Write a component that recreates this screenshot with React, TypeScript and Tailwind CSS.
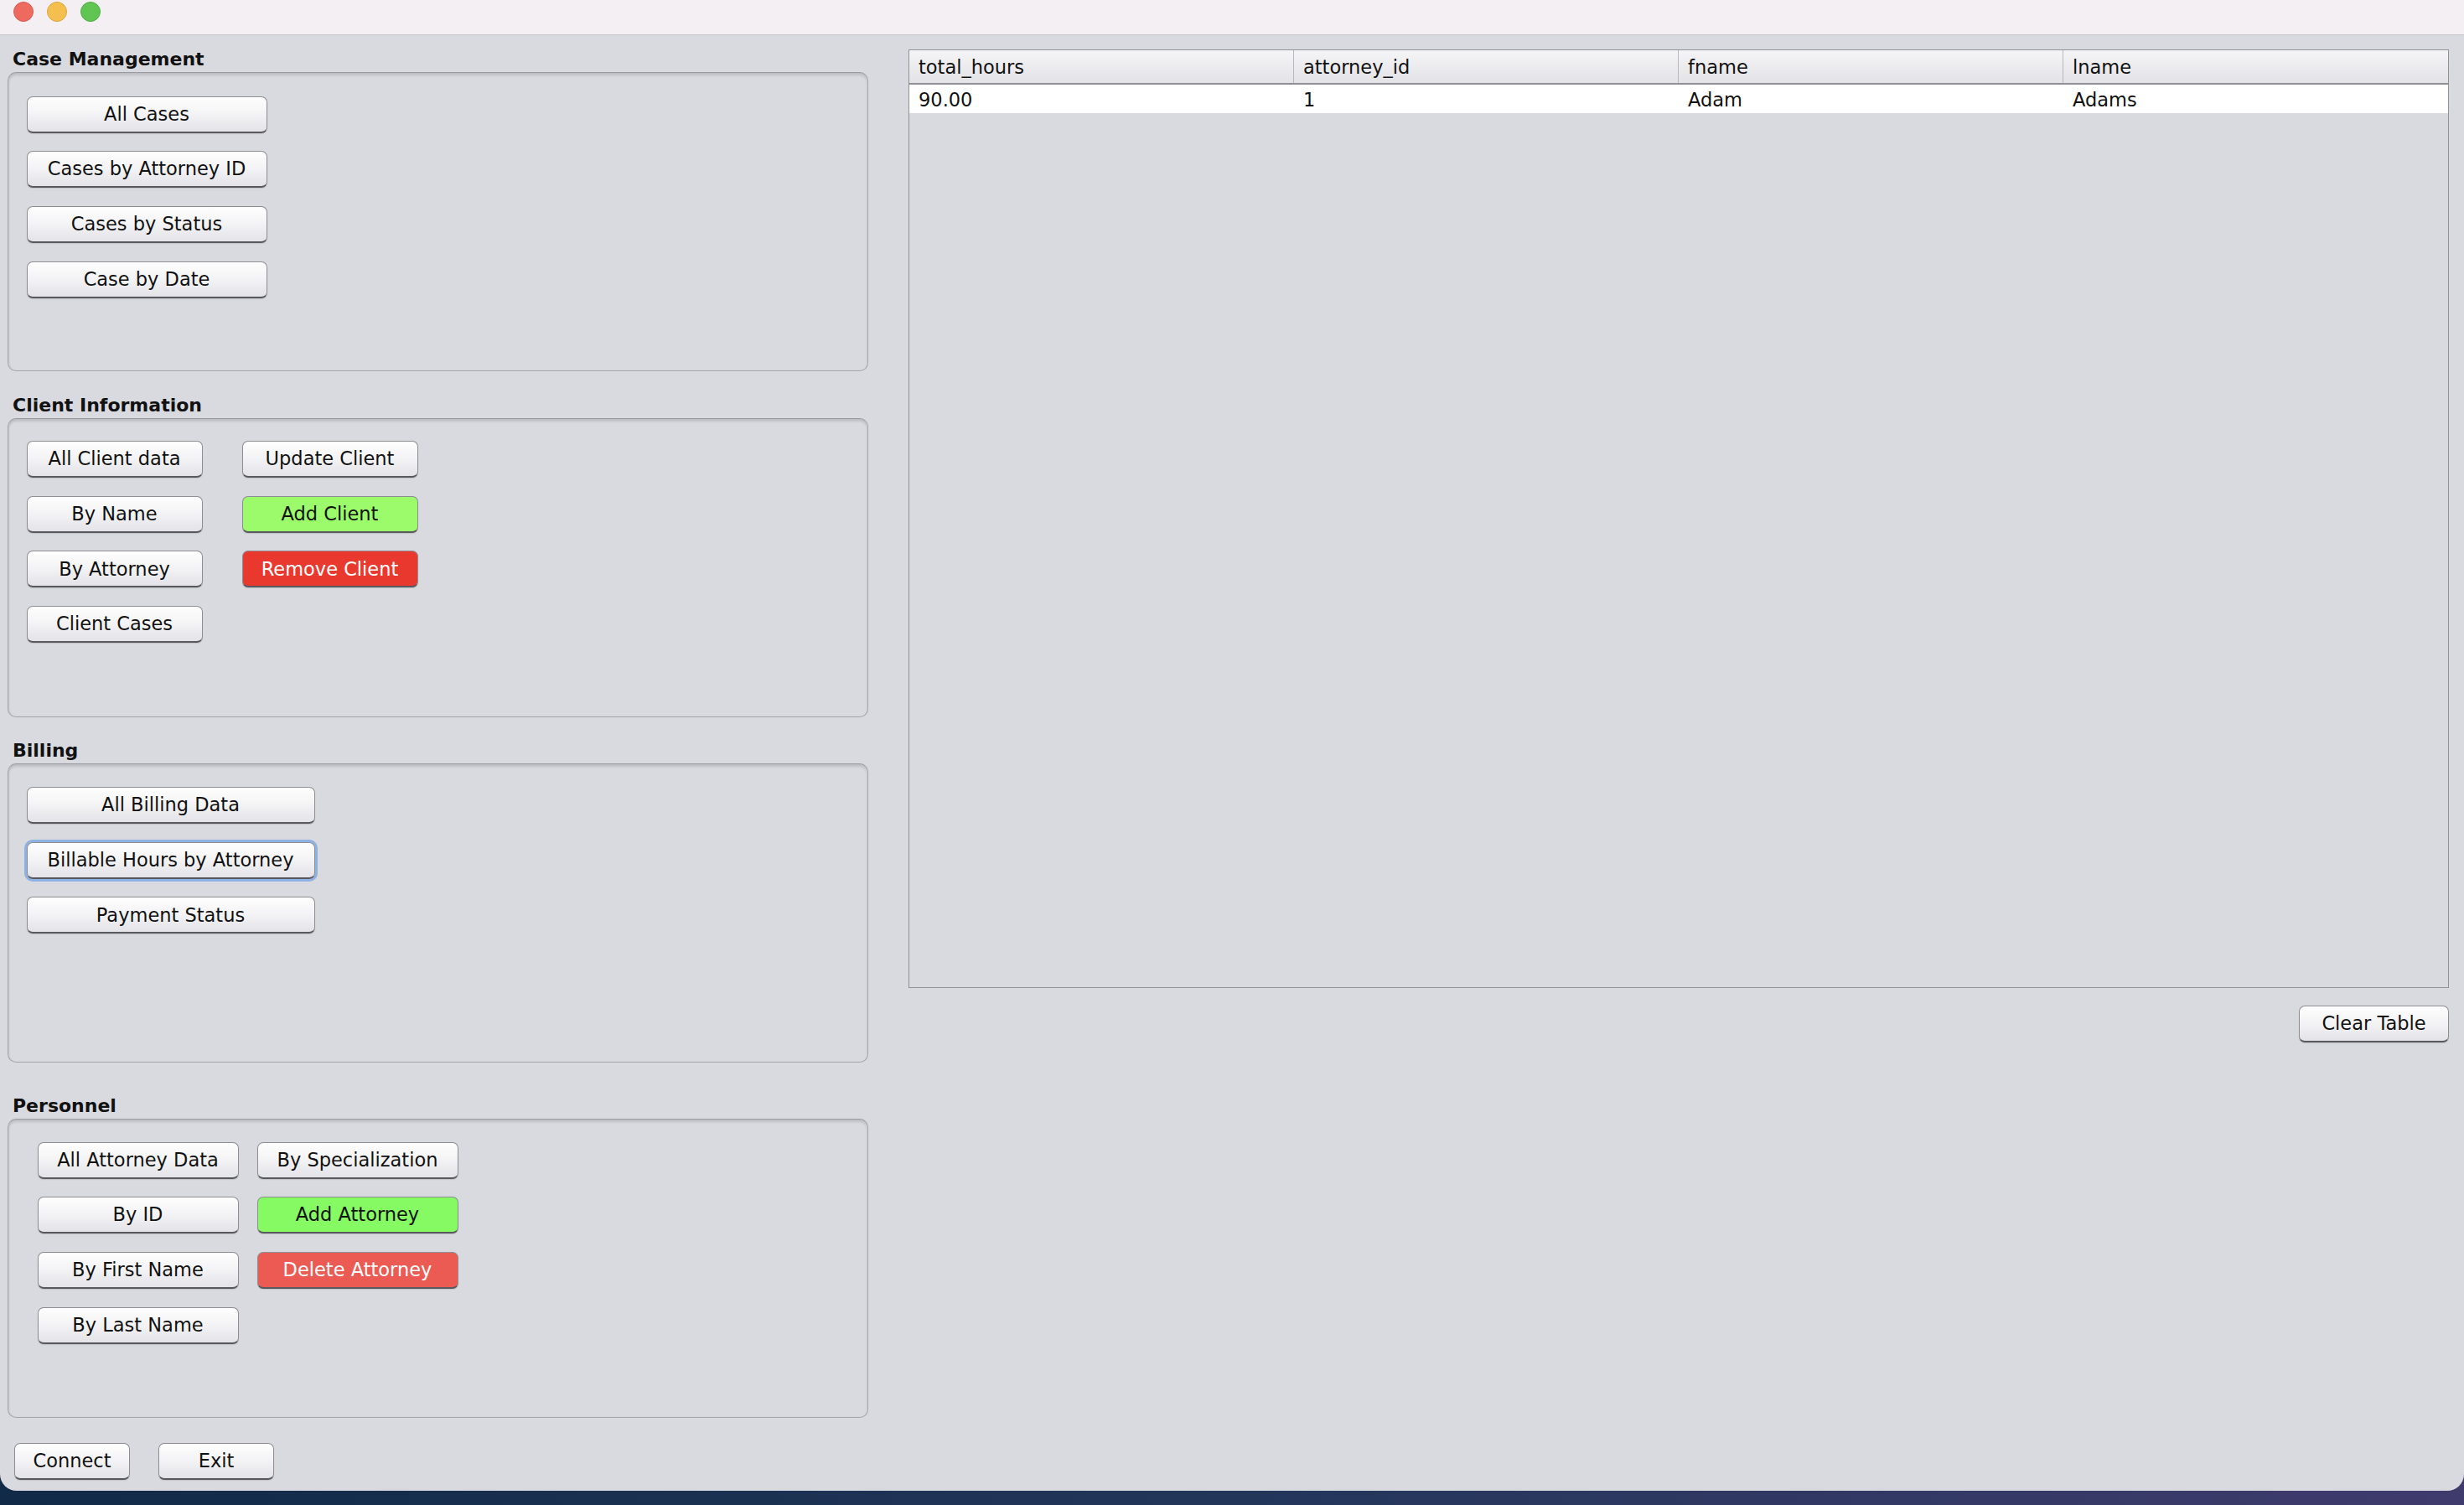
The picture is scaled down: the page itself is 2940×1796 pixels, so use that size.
import React from 'react'
import clsx from 'clsx'

type Tone = 'plain' | 'green' | 'lime' | 'red' | 'salmon'

const tones: Record<Tone, string> = {
  plain: 'bg-gradient-to-b from-[#fefefe] via-[#f3f3f5] to-[#e3e3e8] text-[#111]',
  green: 'bg-[#9cfb6a] text-[#111]',
  lime: 'bg-[#86fa63] text-[#111]',
  red: 'bg-[#e9392e] text-white',
  salmon: 'bg-[#eb5a53] text-white',
}

function Btn({ label, w, tone = 'plain', focused = false }: { label: string; w: string; tone?: Tone; focused?: boolean }) {
  return (
    <div
      className={clsx(
        'h-[44px] flex items-center justify-center rounded-[7px] border border-[#8d8d93] border-b-2 border-b-[#58585e] shadow-[0_1px_1px_rgba(0,0,0,0.12)] text-[22.5px] leading-none whitespace-nowrap',
        tones[tone],
        focused && 'ring-[3px] ring-[#8db1e1]',
        w,
      )}
    >
      {label}
    </div>
  )
}

function Section({ title, top, pad, children }: { title: string; top: string; pad: string; children: React.ReactNode }) {
  return (
    <div className={top}>
      <div className="pl-[6px] text-[22px] font-bold leading-[26px] text-[#111] mb-[2px]">{title}</div>
      <div className={clsx('w-[1027px] h-[357px] rounded-[10px] border-[1.5px] border-[#a5a6ab] border-t-[#9a9ba0] shadow-[inset_0_3px_3px_rgba(0,0,0,0.12),inset_1px_0_2px_rgba(0,0,0,0.06)]', pad)}>
        {children}
      </div>
    </div>
  )
}

const cols = ['total_hours', 'attorney_id', 'fname', 'lname']
const row = ['90.00', '1', 'Adam', 'Adams']

export default function App() {
  return (
    <div className="w-[2940px] h-[1796px] bg-gradient-to-r from-[#102a47] via-[#22365a] to-[#3f3b6d] font-['DejaVu_Sans',sans-serif]">
      <div className="h-[1779px] bg-[#d9dadf] rounded-b-[20px] overflow-hidden flex flex-col">
        <div className="h-[42px] shrink-0 bg-[#f3eff3] border-b border-[#c6c4c9] flex items-start pt-[2px] pl-[16px] gap-[16px]">
          <span className="w-[24px] h-[24px] rounded-full bg-[#ee6a5f] border border-[#d75a50]" />
          <span className="w-[24px] h-[24px] rounded-full bg-[#f5bf4f] border border-[#d9a43d]" />
          <span className="w-[24px] h-[24px] rounded-full bg-[#61c554] border border-[#4fae43]" />
        </div>

        <div className="flex flex-1">
          <div className="w-[1036px] shrink-0 pl-[9px] pt-[16px]">
            <Section title="Case Management" top="" pad="pl-[21.5px] pt-[27.5px]">
              <div className="flex flex-col gap-[21.7px]">
                <Btn label="All Cases" w="w-[287px]" />
                <Btn label="Cases by Attorney ID" w="w-[287px]" />
                <Btn label="Cases by Status" w="w-[287px]" />
                <Btn label="Case by Date" w="w-[287px]" />
              </div>
            </Section>

            <Section title="Client Information" top="mt-[28px]" pad="pl-[21.5px] pt-[26px]">
              <div className="grid grid-cols-[210px_210px] gap-x-[47px] gap-y-[21.7px]">
                <Btn label="All Client data" w="w-[210px]" />
                <Btn label="Update Client" w="w-[210px]" />
                <Btn label="By Name" w="w-[210px]" />
                <Btn label="Add Client" w="w-[210px]" tone="green" />
                <Btn label="By Attorney" w="w-[210px]" />
                <Btn label="Remove Client" w="w-[210px]" tone="red" />
                <Btn label="Client Cases" w="w-[210px]" />
              </div>
            </Section>

            <Section title="Billing" top="mt-[27px]" pad="pl-[21.5px] pt-[27px]">
              <div className="flex flex-col gap-[21.7px]">
                <Btn label="All Billing Data" w="w-[344px]" />
                <Btn label="Billable Hours by Attorney" w="w-[344px]" focused />
                <Btn label="Payment Status" w="w-[344px]" />
              </div>
            </Section>

            <Section title="Personnel" top="mt-[39px]" pad="pl-[34.5px] pt-[26.5px]">
              <div className="grid grid-cols-[240px_240px] gap-x-[22px] gap-y-[21.7px]">
                <Btn label="All Attorney Data" w="w-[240px]" />
                <Btn label="By Specialization" w="w-[240px]" />
                <Btn label="By ID" w="w-[240px]" />
                <Btn label="Add Attorney" w="w-[240px]" tone="lime" />
                <Btn label="By First Name" w="w-[240px]" />
                <Btn label="Delete Attorney" w="w-[240px]" tone="salmon" />
                <Btn label="By Last Name" w="w-[240px]" />
              </div>
            </Section>

            <div className="mt-[30px] pl-[8px] flex gap-[34px]">
              <Btn label="Connect" w="w-[138px]" />
              <Btn label="Exit" w="w-[138px]" />
            </div>
          </div>

          <div className="flex-1 pl-[48px] pr-[18px] pt-[17px] flex flex-col">
            <div className="h-[1120px] border-[1.5px] border-[#8f9197]">
              <div className="h-[41px] grid grid-cols-4 bg-gradient-to-b from-[#f5f5f7] to-[#e3e3e7] border-b-2 border-[#8e9095]">
                {cols.map((c, i) => (
                  <div key={c} className={clsx('flex items-center pl-[11px] pt-[2px] text-[22.5px] text-[#111]', i < 3 && 'border-r border-[#b7b8bc]')}>
                    {c}
                  </div>
                ))}
              </div>
              <div className="h-[34px] grid grid-cols-4 bg-white">
                {row.map((c, i) => (
                  <div key={i} className="flex items-center pl-[11px] pt-[2px] text-[22.5px] text-[#111]">
                    {c}
                  </div>
                ))}
              </div>
            </div>
            <div className="mt-[21px] self-end">
              <Btn label="Clear Table" w="w-[179px]" />
            </div>
          </div>
        </div>
      </div>
    </div>
  )
}
